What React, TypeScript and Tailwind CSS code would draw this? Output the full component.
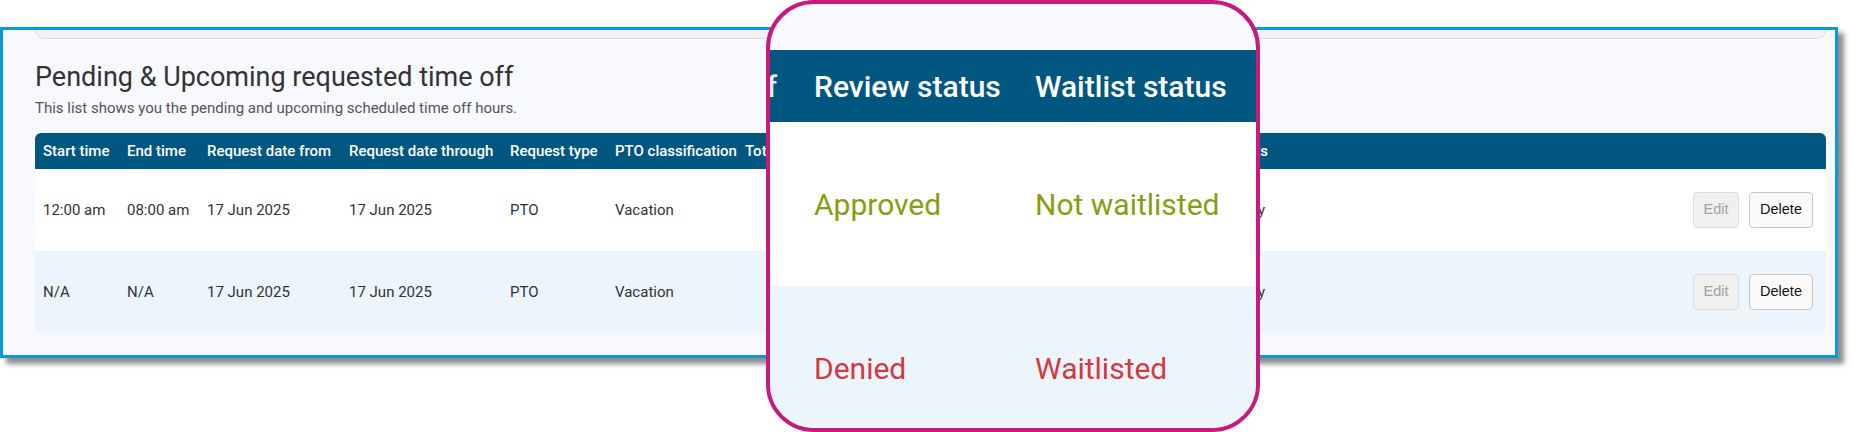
import React from "react";

const cols = [84, 80, 142, 161, 105, 130, 113, 110, 120, 114, 82];

const headers = [
  "Start time",
  "End time",
  "Request date from",
  "Request date through",
  "Request type",
  "PTO classification",
  "Total hours off",
  "Review status",
  "Waitlist status",
  "Approver",
  "Comments"
];

// cells that sit under the magnifier are left empty, only the comment tail shows
const rows = [
  {
    cells: ["12:00 am", "08:00 am", "17 Jun 2025", "17 Jun 2025", "PTO", "Vacation", "", "", "", "", "Birthday"],
    bg: "bg-white"
  },
  {
    cells: ["N/A", "N/A", "17 Jun 2025", "17 Jun 2025", "PTO", "Vacation", "", "", "", "", "Birthday"],
    bg: "bg-[#ecf4fc]"
  }
];

const Cell = ({
  width,
  className = "",
  children
}: {
  width: number;
  className?: string;
  children?: React.ReactNode;
}) => (
  <div className={`shrink-0 pl-2 whitespace-nowrap overflow-hidden ${className}`} style={{ width }}>
    {children}
  </div>
);

const Actions = () => (
  <div className="flex-1 flex justify-end items-center gap-[10px] pr-[13px] font-['Liberation_Sans',Arial,sans-serif] text-[14.5px]">
    <button className="w-[46px] h-[36px] rounded-[4px] border border-[#dcdcdc] bg-[#f0f0f0] text-[#a3a3a3]" disabled>
      Edit
    </button>
    <button className="w-[64px] h-[36px] rounded-[4px] border border-[#c6c6c6] bg-[#fafafa] text-[#111]">
      Delete
    </button>
  </div>
);

const Magnifier = () => (
  <div className="absolute left-[766px] top-0 w-[494px] h-[432px] border-4 border-[#c8197f] rounded-[48px] overflow-hidden bg-[#f7f9fe] font-['Roboto',sans-serif]">
    <div className="h-[46px]" />
    <div className="h-[72px] bg-[#01577f] flex items-center text-white text-[30px] font-medium whitespace-nowrap">
      <div className="w-[28px] shrink-0 flex justify-end pr-[21px] overflow-hidden text-[#e8eef3]">f</div>
      <div className="w-[221px] shrink-0 px-4">Review status</div>
      <div className="shrink-0 px-4">Waitlist status</div>
    </div>
    <div className="h-[164px] bg-white flex items-center text-[30px] text-[#8a9c12] whitespace-nowrap">
      <div className="w-[28px] shrink-0" />
      <div className="w-[221px] shrink-0 px-4">Approved</div>
      <div className="shrink-0 px-4">Not waitlisted</div>
    </div>
    <div className="h-[164px] bg-[#ecf4fc] flex items-center text-[30px] text-[#d23a3f] whitespace-nowrap">
      <div className="w-[28px] shrink-0" />
      <div className="w-[221px] shrink-0 px-4">Denied</div>
      <div className="shrink-0 px-4">Waitlisted</div>
    </div>
  </div>
);

export default function App() {
  return (
    <div className="relative w-[1854px] h-[432px] bg-white overflow-hidden font-['Roboto',sans-serif]">
      <div className="pt-[27px]">
        <div className="w-[1838px] border-[3px] border-[#0a9ad6] bg-[#f7f9fe] pl-[32px] pr-[9px] pb-[22px] shadow-[6px_6px_5px_rgba(0,0,0,0.45)]">
          <div className="h-[9px] bg-[#f3f3f3] border border-t-0 border-[#dcdcdc] rounded-b-[10px]" />
          <h1 className="mt-[23px] text-[27px] leading-[31px] text-[#333]">
            Pending &amp; Upcoming requested time off
          </h1>
          <p className="mt-[7px] text-[15px] leading-[16px] text-[#555]">
            This list shows you the pending and upcoming scheduled time off hours.
          </p>
          <div className="mt-[17px] rounded-[6px] overflow-hidden">
            <div className="h-[36px] bg-[#01577f] flex items-center text-white text-[15px] font-medium">
              {headers.map((h, i) => (
                <Cell key={h} width={cols[i]} className={i === 10 ? "flex justify-end pr-2" : "pr-2"}>
                  {h}
                </Cell>
              ))}
              <div className="flex-1" />
            </div>
            {rows.map((row, r) => (
              <div key={r} className={`h-[82px] flex items-center text-[15px] text-[#333] ${row.bg}`}>
                {row.cells.map((c, i) => (
                  <Cell key={i} width={cols[i]} className={i === 10 ? "flex justify-end pr-[11px]" : "pr-2"}>
                    {c}
                  </Cell>
                ))}
                <Actions />
              </div>
            ))}
          </div>
        </div>
      </div>
      <Magnifier />
    </div>
  );
}
